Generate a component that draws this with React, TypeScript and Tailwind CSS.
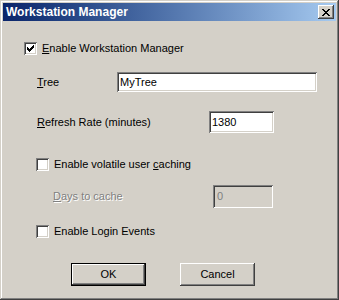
import React, { useState } from 'react';

const sunken =
  'shadow-[inset_1px_1px_#808080,inset_-1px_-1px_#ffffff,inset_2px_2px_#404040,inset_-2px_-2px_#d4d0c8]';
const raised =
  'shadow-[inset_-1px_-1px_#404040,inset_1px_1px_#ffffff,inset_-2px_-2px_#808080,inset_2px_2px_#d4d0c8]';

// classic 7x7 check mark, one string per row
const checkRows = ['......#', '.....##', '#...###', '##.###.', '#####..', '.###...', '..#....'];

const Check: React.FC<{ checked: boolean; onToggle: () => void }> = ({ checked, onToggle }) => (
  <button
    onClick={onToggle}
    className={`w-[13px] h-[13px] bg-white flex items-center justify-center shrink-0 ${sunken}`}
  >
    {checked && (
      <svg width="7" height="7" viewBox="0 0 7 7" shapeRendering="crispEdges">
        {checkRows.map((row, y) =>
          row.split('').map((c, x) => (c === '#' ? <rect key={`${x}-${y}`} x={x} y={y} width="1" height="1" fill="#000" /> : null))
        )}
      </svg>
    )}
  </button>
);

const App: React.FC = () => {
  const [enabled, setEnabled] = useState(true);
  const [volatile, setVolatile] = useState(false);
  const [loginEvents, setLoginEvents] = useState(false);
  const [tree, setTree] = useState('MyTree');
  const [rate, setRate] = useState('1380');

  return (
    <div
      className="w-[339px] h-[300px] bg-[#d4d0c8] p-[3px] text-[11px] text-black shadow-[inset_-1px_-1px_#404040,inset_1px_1px_#d4d0c8,inset_-2px_-2px_#808080,inset_2px_2px_#ffffff] flex flex-col"
      style={{ fontFamily: 'Tahoma, "Liberation Sans", Arial, sans-serif' }}
    >
      {/* Title bar */}
      <div className="h-[18px] bg-gradient-to-r from-[#0a246a] to-[#a6caf0] flex items-center justify-between pl-[3px] pr-[2px]">
        <span className="text-white font-bold text-[12px] leading-none">Workstation Manager</span>
        <button className={`w-[16px] h-[14px] bg-[#d4d0c8] flex items-center justify-center ${raised}`}>
          <svg width="8" height="7" viewBox="0 0 8 7" shapeRendering="crispEdges">
            <path d="M0 0h2v1h1v1h2v-1h1v-1h2v1h-1v1h-1v1h-1v1h1v1h1v1h1v1h-2v-1h-1v-1h-2v1h-1v1h-2v-1h1v-1h1v-1h1v-1h-1v-1h-1v-1h-1z" fill="#000" />
          </svg>
        </button>
      </div>

      {/* Body */}
      <div className="flex flex-col">
        <div className="mt-[21px] pl-[21px] flex items-center gap-[5px] h-[13px]">
          <Check checked={enabled} onToggle={() => setEnabled(!enabled)} />
          <span>
            <span className="underline">E</span>nable Workstation Manager
          </span>
        </div>

        <div className="mt-[17px] pl-[34px] flex items-center">
          <span className="w-[80px]">
            <span className="underline">T</span>ree
          </span>
          <input
            value={tree}
            onChange={(e) => setTree(e.target.value)}
            className={`w-[200px] h-[20px] bg-white px-[3px] outline-none ${sunken}`}
          />
        </div>

        <div className="mt-[19px] pl-[34px] flex items-center">
          <span className="w-[172px]">
            <span className="underline">R</span>efresh Rate (minutes)
          </span>
          <input
            value={rate}
            onChange={(e) => setRate(e.target.value)}
            className={`w-[65px] h-[22px] bg-white px-[3px] outline-none ${sunken}`}
          />
        </div>

        <div className="mt-[25px] pl-[33px] flex items-center gap-[5px] h-[13px]">
          <Check checked={volatile} onToggle={() => setVolatile(!volatile)} />
          <span>
            Enable volatile user <span className="underline">c</span>aching
          </span>
        </div>

        <div className="mt-[14px] pl-[50px] flex items-center">
          <span className="w-[160px] text-[#808080] [text-shadow:1px_1px_#ffffff]">
            <span className="underline">D</span>ays to cache
          </span>
          <div className={`w-[60px] h-[23px] bg-[#d4d0c8] px-[4px] flex items-center text-[#808080] ${sunken}`}>
            0
          </div>
        </div>

        <div className="mt-[17px] pl-[33px] flex items-center gap-[5px] h-[13px]">
          <Check checked={loginEvents} onToggle={() => setLoginEvents(!loginEvents)} />
          <span>Enable Login Events</span>
        </div>

        <div className="mt-[25px] pl-[68px] flex gap-[34px]">
          <button className="w-[75px] h-[23px] border border-black bg-[#d4d0c8] shadow-[inset_-1px_-1px_#404040,inset_1px_1px_#ffffff,inset_-2px_-2px_#808080]">
            OK
          </button>
          <button className={`w-[75px] h-[23px] bg-[#d4d0c8] ${raised}`}>Cancel</button>
        </div>
      </div>
    </div>
  );
};

export default App;
